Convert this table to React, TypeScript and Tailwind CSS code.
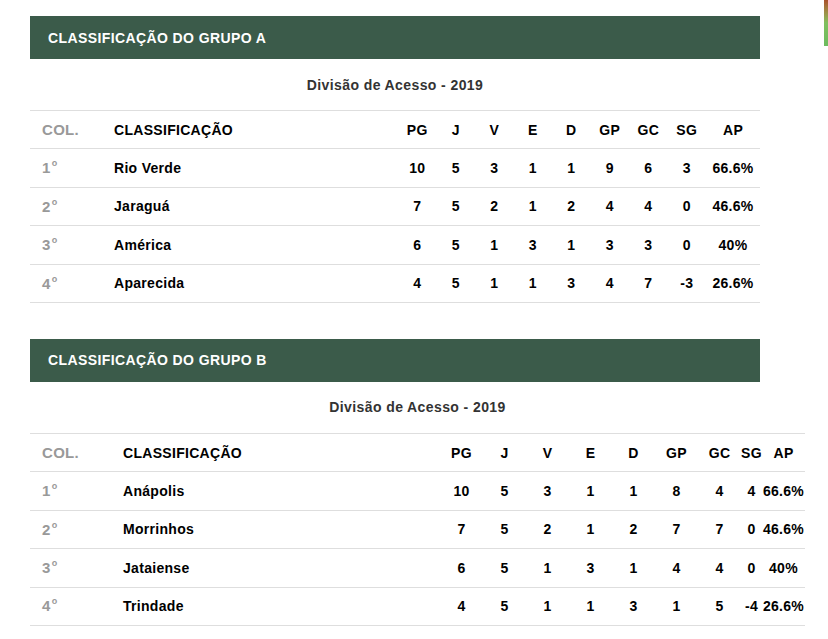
const groups = [
  {
    title: "CLASSIFICAÇÃO DO GRUPO A",
    cols: "grid-cols-[72px_296px_repeat(8,38.5px)_54px]",
    width: "w-[730px]",
    rows: [
      ["1", "Rio Verde", "10", "5", "3", "1", "1", "9", "6", "3", "66.6%"],
      ["2", "Jaraguá", "7", "5", "2", "1", "2", "4", "4", "0", "46.6%"],
      ["3", "América", "6", "5", "1", "3", "1", "3", "3", "0", "40%"],
      ["4", "Aparecida", "4", "5", "1", "1", "3", "4", "7", "-3", "26.6%"],
    ],
  },
  {
    title: "CLASSIFICAÇÃO DO GRUPO B",
    cols: "grid-cols-[81px_329px_repeat(7,43px)_21px_43px]",
    width: "w-[775px]",
    rows: [
      ["1", "Anápolis", "10", "5", "3", "1", "1", "8", "4", "4", "66.6%"],
      ["2", "Morrinhos", "7", "5", "2", "1", "2", "7", "7", "0", "46.6%"],
      ["3", "Jataiense", "6", "5", "1", "3", "1", "4", "4", "0", "40%"],
      ["4", "Trindade", "4", "5", "1", "1", "3", "1", "5", "-4", "26.6%"],
    ],
  },
];

const heads = ["PG", "J", "V", "E", "D", "GP", "GC", "SG", "AP"];

const Standings = ({ group }: { group: (typeof groups)[number] }) => (
  <section className="mb-[36px]">
    <div className="w-[730px] h-[43px] bg-[#3b5b4a] flex items-center pl-[18px] pt-px">
      <h2 className="text-white text-[14px] font-bold tracking-[0.4px]">{group.title}</h2>
    </div>
    <div className={group.width}>
      <p className="h-[51px] pt-px flex items-center justify-center text-[14px] font-bold text-[#333] tracking-[0.4px]">
        Divisão de Acesso - 2019
      </p>
      <div className="border-b border-[#dedede]">
        <div className={`grid ${group.cols} h-[38.4px] pt-px items-center border-t border-[#dedede] text-[14px] font-bold text-black tracking-[0.3px]`}>
          <span className="pl-3 text-[15px] text-[#999]">COL.</span>
          <span className="pl-3">CLASSIFICAÇÃO</span>
          {heads.map((h) => (
            <span key={h} className="text-center whitespace-nowrap">{h}</span>
          ))}
        </div>
        {group.rows.map((r) => (
          <div
            key={r[0]}
            className={`grid ${group.cols} h-[38.4px] pt-px items-center border-t border-[#dedede] text-[14px] font-bold text-black tracking-[0.3px]`}
          >
            <span className="pl-3 text-[15px] text-[#999] flex items-start">
              <span>{r[0]}</span>
              <span className="text-[9px] leading-none mt-[2px] ml-px">o</span>
            </span>
            <span className="pl-3">{r[1]}</span>
            {r.slice(2).map((v, i) => (
              <span key={i} className="text-center whitespace-nowrap">{v}</span>
            ))}
          </div>
        ))}
      </div>
    </div>
  </section>
);

export default function App() {
  return (
    <div className="relative min-h-[639px] bg-white pt-4 pl-[30px] font-['Liberation_Sans',Arial,sans-serif] overflow-hidden">
      <div className="absolute left-[824px] top-0 w-1 h-[46px] bg-gradient-to-b from-[#a8502c] via-[#7fc05e] to-[#6dbb5f]" />
      {groups.map((g) => (
        <Standings key={g.title} group={g} />
      ))}
    </div>
  );
}
